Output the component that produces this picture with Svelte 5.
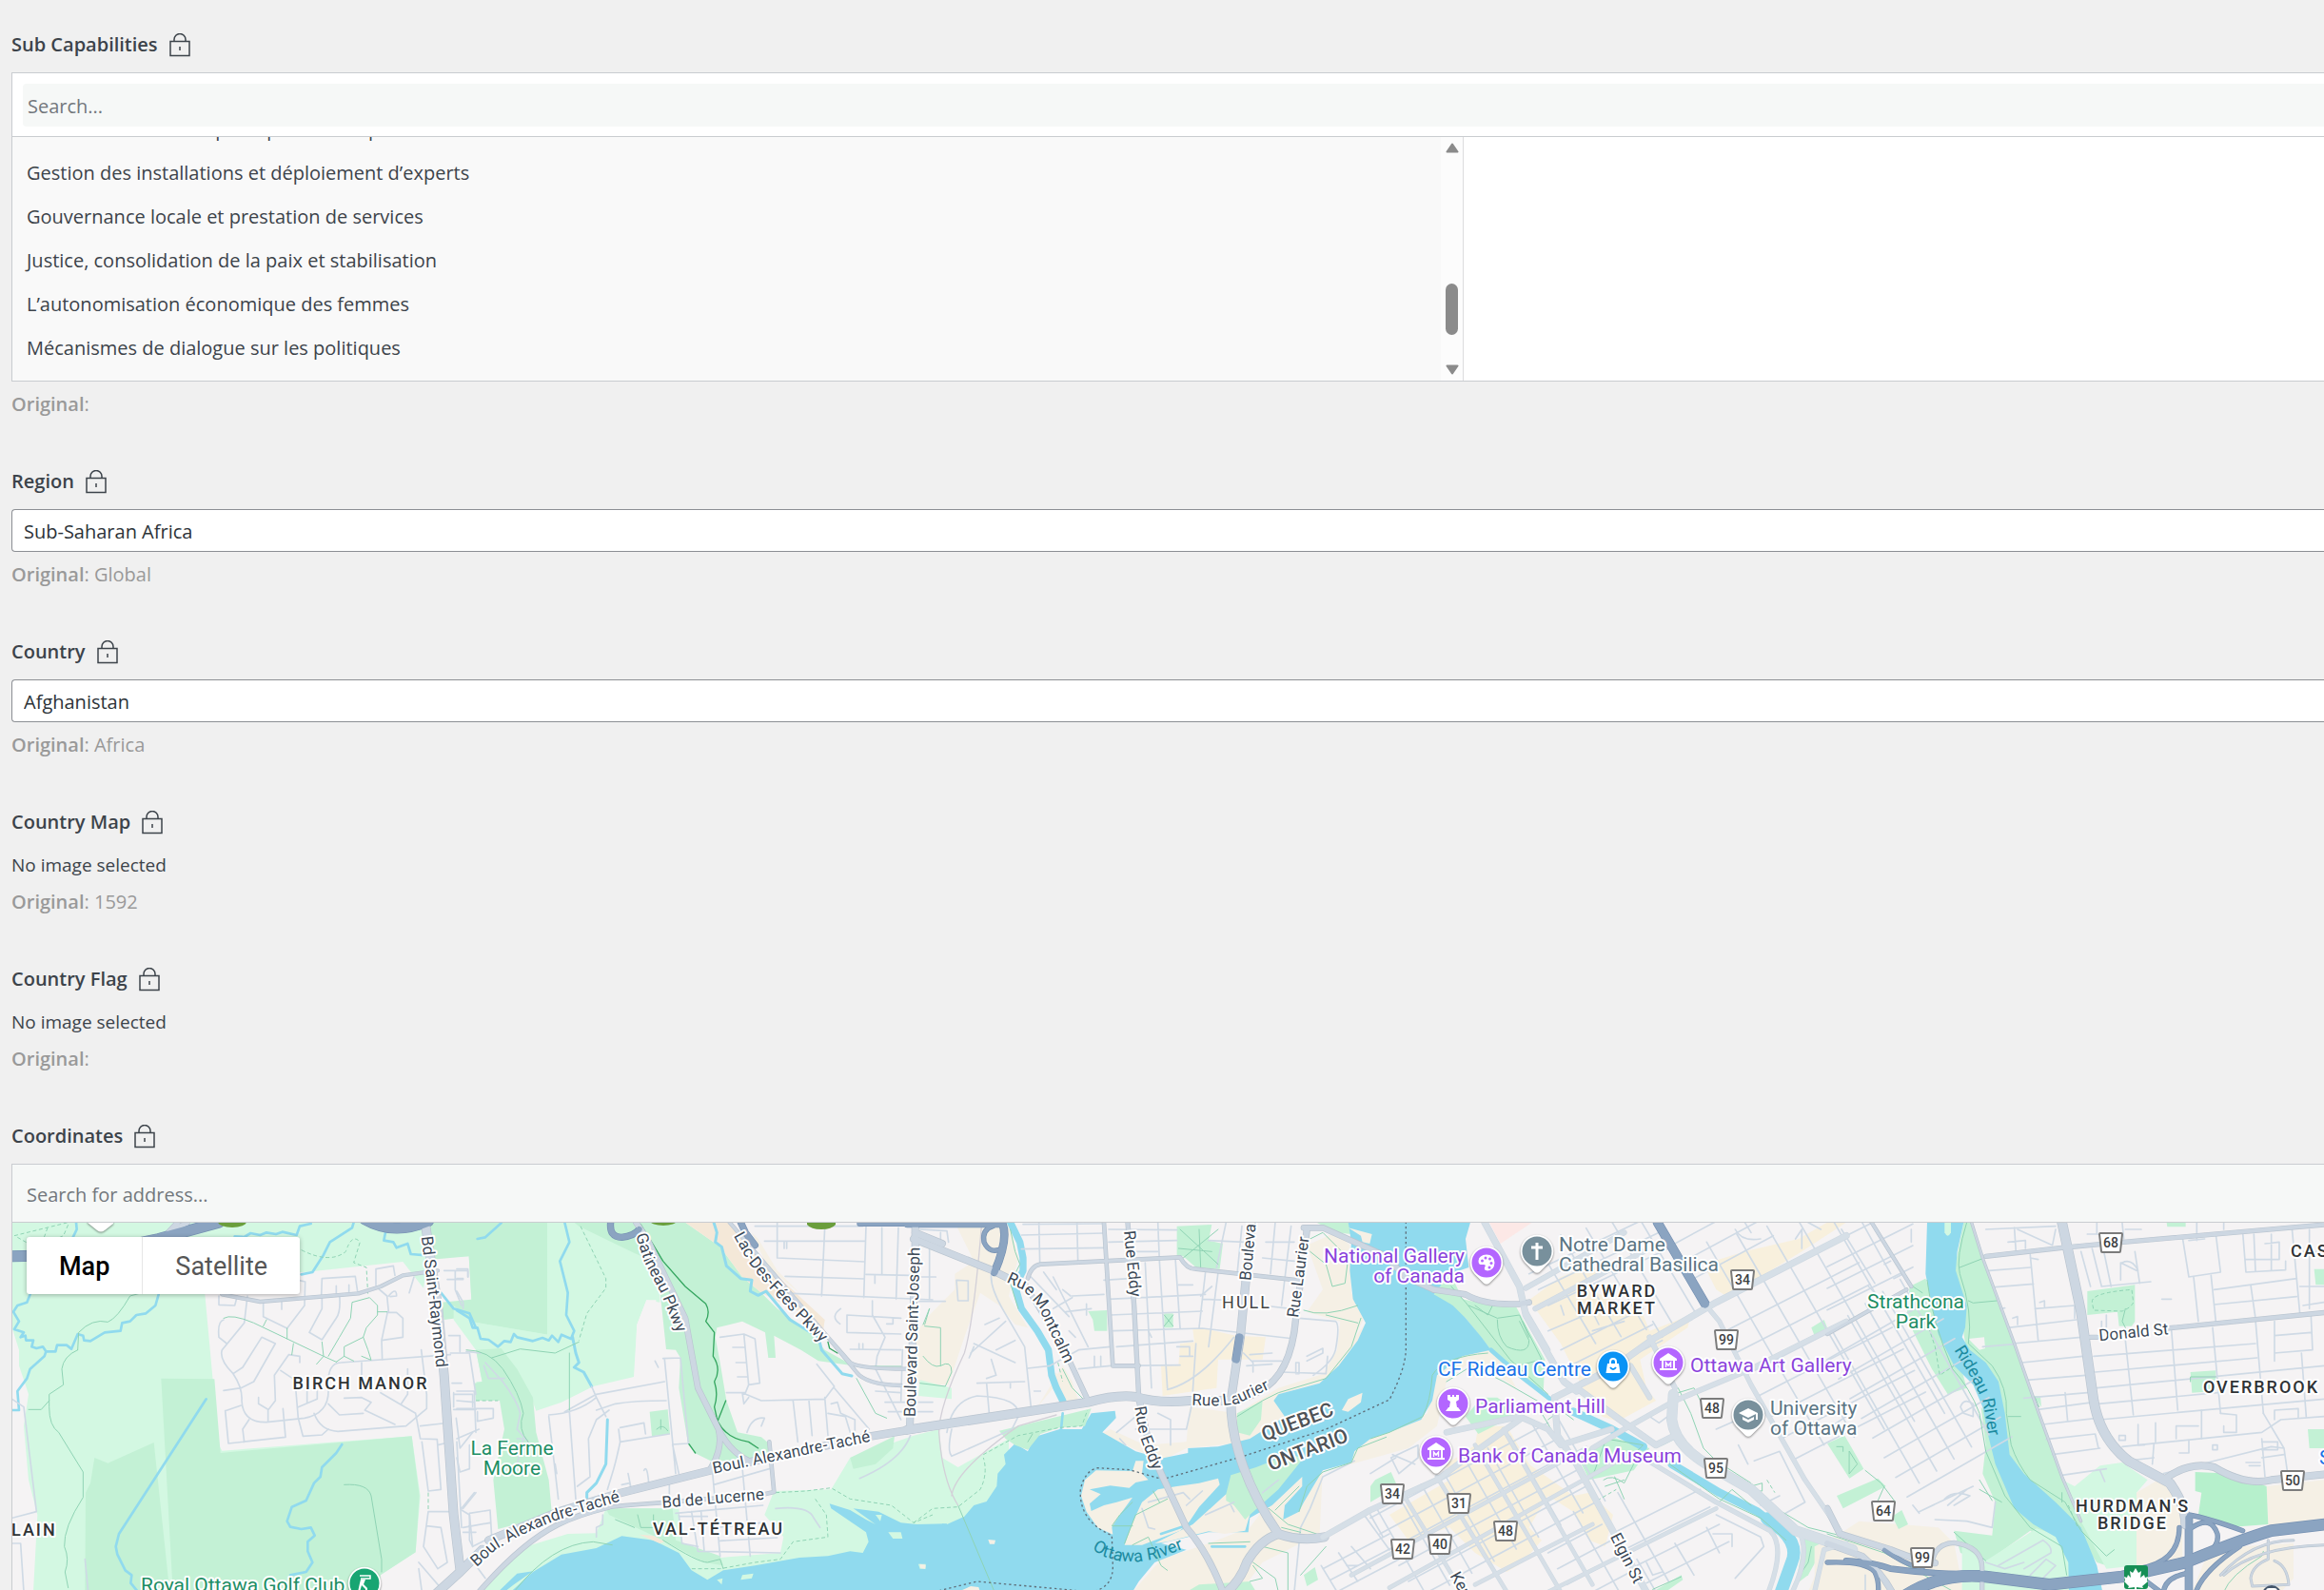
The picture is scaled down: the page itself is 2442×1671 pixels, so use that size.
<script>
  let search = $state('')
  let region = $state('Sub-Saharan Africa')
  let country = $state('Afghanistan')
  let address = $state('')
  let mapType = $state('map')

  const capabilities = [
    'Gestion des finances publiques et comptabilité',
    'Gestion des installations et déploiement d’experts',
    'Gouvernance locale et prestation de services',
    'Justice, consolidation de la paix et stabilisation',
    'L’autonomisation économique des femmes',
    'Mécanismes de dialogue sur les politiques'
  ]

  // Map geometry is stored per tile, three units to the pixel, tiles 480px apart.
  const TILE = 1440

  // n parallel segments, each one moved on by (dx, dy)
  function hatch(x, y, lx, ly, dx, dy, n) {
    let d = ''
    for (let i = 0; i < n; i++) d += `M${x + dx * i} ${y + dy * i}l${lx} ${ly}`
    return d
  }

  const areas = [
    [0, 'park', 'M38 38H1800V400H1440V1203H38Z'],
    [0, 'land', 'M640 200L960 195L1270 162L1335 245L1350 150L1478 145L1490 352L1520 400L1520 1203H1195L1200 1148L1310 1078L1325 900L1298 712L700 758L690 740Z'],
    [0, 'land', 'M38 370L60 440L60 490L90 580L75 680L90 850L118 960L105 1203H38Z'],
    [0, 'wood', 'M508 530L676 532L695 765L1298 712L1322 900L1310 1078L1200 1150L1180 1203H545Z'],
    [0, 'wood', 'M485 732L340 797L298 780L285 860L270 890L268 1203H535Z'],
    [0, 'wood', 'M1355 38H1725V392L1490 352L1478 145L1360 155Z'],
    [0, 'wood', 'M1390 290L1500 280L1500 370L1440 340L1400 345Z'],
    [1, 'land', 'M-10 400H700V1203H-10Z'],
    [1, 'park', 'M285 38H640V290L598 283L568 360L558 525L430 555L330 605L250 632L235 590L130 600L60 540L80 540L60 440L-10 345V300L50 352L290 392Z'],
    [1, 'land', 'M598 283H628L632 350L660 438L690 440L705 480L560 530L568 360Z'],
    [1, 'wood', 'M370 38H720L830 115L900 210L960 260L1010 310L1110 380L1160 440L1250 490L1140 475L1085 440L1000 395L1005 465H982L972 385L900 350L820 370L815 400L830 480L850 600L885 700L960 715L990 740L1000 790H800L750 765L730 740L700 560L705 465L690 440L660 438L640 250L620 160L560 135L385 50Z'],
    [1, 'wood', 'M60 440L140 435L190 500L240 590L250 700L290 850L300 960L130 1005L115 850L150 690L135 600L60 600L55 545L80 540Z'],
    [1, 'wood', 'M608 635L665 628L672 705L615 712Z'],
    [1, 'sand2', 'M720 38H860L960 160L1160 345L1155 380L1080 320L960 260L900 210L830 115Z'],
    [1, 'sand', 'M930 70L950 90L1010 190L1080 260L980 180Z'],
    [1, 'park', 'M60 1203L220 1060L350 1020L440 1018L470 940L700 940L710 1050L760 1075L830 1095L1020 1080L1030 1030L970 960L1000 885L1180 880L1240 780L1440 710L1520 690L1530 780L1580 810L1740 720V990L1500 1203Z'],
    [1, 'wood', 'M1240 780L1380 712L1375 750L1320 800L1250 815Z'],
    [1, 'wood', 'M470 940L680 940L690 1040L830 1090L840 1120L780 1110L650 1040L480 960Z'],
    [2, 'sand', 'M130 38H300L330 150L300 270L360 370L320 360L270 300L210 260L160 400L110 550L20 550L-10 500L20 370L50 330L130 250L130 200L190 160Z'],
    [2, 'park', 'M20 535L120 560V595L15 585Z'],
    [2, 'wood', 'M830 50L940 45L930 95L975 105L965 185L890 180L850 145H830Z'],
    [2, 'wood', 'M550 318L610 315V380H570L565 345Z'],
    [2, 'wood', 'M790 325H818V370H790Z'],
    [2, 'shop', 'M880 375L925 375L1015 395L1110 400L1100 470H960L955 560L785 585L780 490H835L840 420L885 415Z'],
    [2, 'wood', 'M1270 38H1370L1380 75L1330 70Z'],
    [2, 'sand', 'M1240 110L1330 70L1375 110L1380 260L1420 340L1340 500L1290 520L1335 440L1345 350L1240 320L1290 250Z'],
    [2, 'sand', 'M470 490L500 540L520 600L470 600L440 560L390 620L440 540Z'],
    [2, 'sand', 'M870 620L1020 640L1150 560L1310 510L1425 355L1400 410L1340 490L1280 545L1150 580L1180 650L1060 730L860 750L780 790L590 705L620 690L730 740L860 730Z'],
    [2, 'sand', 'M690 1203L780 1100L930 1050L1060 1000L1120 920L1200 840L1290 810L1280 1020L1200 1060L1100 1110L1030 1203Z'],
    [2, 'wood', 'M860 1203L900 1180L1060 1170L1080 1203ZM1365 940L1455 870L1470 895L1380 960ZM1230 1150L1265 1125L1275 1165L1240 1185Z'],
    [2, 'land', 'M1290 840L1390 800L1440 740L1500 730V1000H1285Z'],
    [3, 'sand', 'M-60 740L60 700L180 640L200 520L270 450L390 430L460 560L400 520L300 490L240 540L210 680L120 750L-60 800Z'],
    [3, 'pink', 'M375 38H510L410 105Z'],
    [3, 'shop', 'M520 310L650 230L860 330L880 380L1010 330L1000 370L850 470L870 560L900 600L780 665L730 650L670 560L600 420Z'],
    [3, 'shop', 'M1050 170L1180 130L1350 90L1440 38H1500L1360 130L1180 240L1130 275L1090 250Z'],
    [3, 'shop', 'M490 290L600 210L700 170L720 200L540 310Z'],
    [3, 'shop', 'M60 960L250 850L240 800L330 740L340 680L430 680L500 800L640 900L690 890L765 960L740 1060L690 1040L640 950L560 900L500 1000L540 1040L480 1110L430 1140L330 1080L250 1000L120 1040Z'],
    [3, 'wood', 'M300 650L350 590L400 590L470 640L340 705Z'],
    [3, 'wood', 'M650 770L760 715L880 750L830 820L690 850Z'],
    [3, 'wood', 'M15 850L65 825L85 870L0 920V870Z'],
    [3, 'wood', 'M190 250L255 205L290 280L380 300L460 305L500 380L550 470L545 580L470 520L380 440L300 340L220 290Z'],
    [3, 'wood', 'M1390 370L1430 345L1440 370L1400 395ZM890 1203L980 1150L985 1165L930 1203Z'],
    [3, 'wood', 'M1340 1180L1370 1020L1430 1060L1380 1150Z'],
    [3, 'sand', 'M1440 1060H1510V1203H1380Z'],
    [4, 'wood', 'M0 735L55 710L115 815L70 845Z'],
    [4, 'sand', 'M-40 1060L40 1020L100 980L350 1000L400 1050L430 1203H-40Z'],
    [4, 'wood', 'M430 38H455L490 150L530 260L590 420L660 620L740 840L800 980L880 1090V1120L850 1110L780 1010L700 930L560 780L540 560L440 450L400 190Z'],
    [4, 'land', 'M445 405L495 400L498 435L480 440Z'],
    [4, 'wood', 'M260 240L310 215L350 330L420 490L440 560L380 580L330 500L250 340Z'],
    [4, 'wood', 'M485 620L540 700L560 850L620 930L740 1010L750 1070L640 1010L500 1110L420 1080L400 1010L520 1025L530 920L490 830L500 740Z'],
    [4, 'park', 'M425 1060L500 1105L660 1003L740 1030L790 1110V1203H425Z'],
    [4, 'park', 'M740 850L780 870L860 805L930 795L1010 850L975 890V1120L880 1130L800 980Z'],
    [4, 'sand', 'M975 890L1060 840L1120 940V1120H975Z'],
    [4, 'sand', 'M1385 870L1566 850V1010L1390 1005Z'],
    [4, 'sand', 'M1150 1203L1200 1080L1300 1060L1470 1050V1160L1430 1203Z'],
    [4, 'turf', 'M1160 825L1280 830L1385 870L1390 990L1260 1000L1170 960L1180 890L1160 885Z'],
    [4, 'wood', 'M820 255L970 235V350L960 365H920L915 320L820 330Z'],
    [4, 'wood', 'M1145 510L1225 505V570L1150 575ZM1535 185H1566V235H1540ZM1515 690H1566V750H1520ZM1070 38H1130V52H1072Z'],
    [4, 'wood', 'M30 900L160 845L185 870L50 940ZM205 965L235 945L255 990L225 1005ZM650 585H672L675 620Z']
  ]

  const waters = [
    [1, 'water', 'M170 1203L240 1140L330 1085L440 1065L520 1027L620 1040L700 1080L740 1135L790 1165L840 1135L940 1120L1080 1095L1170 1090L1240 1075L1280 1080L1298 1045L1290 1015L1180 940L1175 925L1240 945L1290 975L1320 990L1250 940L1330 950L1400 985L1450 990L1545 988V1203Z'],
    [1, 'water', 'M130 1203L190 1145L240 1138L180 1180L150 1203Z'],
    [1, 'sand2', 'M575 1022L620 1026L655 1045L640 1050Z'],
    [2, 'water', 'M90 1203V988L105 990L160 965L190 930L230 918L262 870L265 830L290 800L285 770L320 735L360 760L380 715L460 690L530 690L560 640L635 632L638 655L595 700L700 760L780 782L865 765V750L960 745L1060 720L1170 650L1135 600L1150 580L1280 545L1340 490L1400 410L1425 355L1385 280L1375 190L1380 100L1370 38H1755L1740 90L1750 180L1690 200L1640 265L1700 300L1740 340L1790 400L1820 440L1730 460L1650 520L1635 600L1600 660L1500 700L1440 720L1390 760L1380 795L1290 820L1230 920L1215 950L1165 975L1170 930L1225 870L1225 840L1130 930L1060 970L1055 1015L930 1015L780 1050L860 1070L760 1110L710 1170L690 1203Z'],
    [2, 'sand', 'M575 820L690 822L700 790L725 790L720 830L740 850L700 858L680 875L620 868L555 880L590 895L555 925L560 948L600 930L640 920L690 905L650 960L625 1000L628 1022L580 1000L545 950L528 900L540 850Z'],
    [2, 'sand', 'M665 1055L690 985L720 920L770 880L830 870L900 860L960 845L965 865L900 935L870 980L840 1010L720 1055Z'],
    [2, 'sand', 'M760 1050L880 990L985 895L1060 960L1045 1010L980 1020L930 1012L800 1045Z'],
    [2, 'wood', 'M985 895L1000 835L1080 810L1180 770L1230 780L1150 880L1060 960L1045 975L1010 930L985 915Z'],
    [2, 'sand', 'M1350 630L1370 595L1415 575L1410 605L1370 635ZM1370 55L1445 75L1438 105L1415 100L1410 80Z'],
    [2, 'wood', 'M1020 640L1100 600L1095 660L1060 710L1020 700Z'],
    [2, 'wood', 'M270 695L560 625L540 680L460 685L400 705L360 755L320 740L290 720Z'],
    [1, 'park', 'M1360 1015L1400 1015L1405 1035L1375 1035ZM900 1150L935 1145L930 1160L895 1165ZM820 1165L838 1160L835 1180ZM1455 1115H1478V1130H1460ZM1320 960L1340 960L1335 980Z'],
    [2, 'sand', 'M235 1038L258 1040L255 1052H240ZM20 1115L38 1118L36 1130L22 1128ZM140 1203L180 1185L205 1188L210 1203ZM440 510L465 520L480 570L455 575Z'],
    [4, 'water', 'M315 38H430L410 130L405 190L440 300L435 370L425 400L450 440L500 480L540 540L560 640L575 770L620 830L720 920L800 1000L850 1120L868 1203H762L760 1110L720 1030L650 990L590 940L560 870L530 800L505 700L490 620L460 550L400 490L350 390L330 300L310 200Z'],
    [4, 'park', 'M370 38H390V70Q380 90 370 70Z']
  ]

  const streams = [
    [0, 8, 'M95 265L85 290L55 300L42 320L60 350L45 375L75 385L65 400L80 395L82 410L105 410L100 430L115 435L135 430L145 445L175 445L180 425L210 425L225 437L245 390L262 395L265 410L285 412L330 385L380 380L385 355L410 350L430 330L460 325L490 300L500 265'],
    [0, 8, 'M145 445L140 460L95 500L85 530L55 570L60 630H38M240 38L242 60L230 85'],
    [0, 8, 'M740 82L770 84L790 72L820 78L840 70L870 75L890 68L935 78L945 50L980 42M950 202L985 195L1020 140L1040 100L1110 55L1115 38'],
    [0, 8, 'M1215 70L1210 95L1240 100L1250 118L1285 105L1295 138L1345 142M1390 260L1430 310L1480 325L1500 370'],
    [0, 8, 'M650 595L375 1020L365 1060L370 1085L395 1135L415 1150L412 1175L435 1203'],
    [0, 8, 'M1078 738L1060 765L1015 810L1010 840L990 860L965 915L920 935L905 980L915 998L950 1005L980 1000L992 1025L970 1045V1075L985 1110L965 1140L915 1150'],
    [1, 8, 'M65 90L90 85L140 40M340 38L355 100L325 160L350 260L345 330L370 380L360 405L330 392L320 415L300 395L290 410L270 402L240 412L190 400L180 390L170 415L150 412L130 430L100 408L75 405L65 370L50 370L40 340L0 315'],
    [1, 9, 'M365 400L375 450L385 480L370 495L400 510L425 555M475 660L470 800L440 860L410 890V910'],
    [1, 9, 'M810 38L820 70L815 100L835 115L850 175L895 215L930 220L925 255L950 268L975 255L1050 345L1140 400L1150 440L1215 515L1245 522'],
    [2, 22, 'M305 38L335 100L345 150L345 190L320 240L340 310L390 380L425 440L435 520L450 560L470 600'],
    [2, 8, 'M470 640L465 690M780 1020L870 990M940 1060L1045 1060M890 960L920 940'],
    [3, 14, 'M380 440L470 520L560 590L640 640'],
    [3, 26, 'M640 635L760 690L860 745M950 800L1100 890L1220 950L1310 1020'],
    [3, 40, 'M1250 972L1300 1010Q1350 1060 1328 1110L1285 1230']
  ]

  const minor = [
    [0, 'M690 270V298L740 300L748 270M830 290V335L905 372L960 300L962 225L940 220M1013 270L1015 215L1120 208L1128 262M1060 238V262M1100 235V258M1070 265Q1075 320 1060 340L1015 408L975 385L1015 310V270M888 285V312'],
    [0, 'M780 270L770 355L700 440Q690 470 735 515Q765 560 762 600Q765 670 840 668L960 655Q1040 640 1035 560Q1030 480 1075 480L1420 455M705 345Q685 350 690 400L715 420M735 515L765 495L825 400L868 420L800 540L760 560L705 568'],
    [0, 'M865 520L910 455L945 460V480M865 520L868 600L845 630V665M815 590V610L845 628M885 505L930 535L940 655L955 712L1015 708L1035 690M710 632L760 615M710 632L720 735L900 715L892 625M770 730L765 690L785 660M968 570V605M940 620L1000 595V570'],
    [0, 'M990 640Q1010 695 1065 697L1280 680L1345 625V580L1328 440M1140 480V520M1205 470L1203 410L1270 400V340L1250 322H1220M1185 235V185L1240 175L1245 205M1225 320L1220 270L1185 240M1203 410L1222 320M1225 270Q1250 240 1250 270L1230 272M1290 260L1305 210'],
    [0, 'M1200 575L1310 640L1325 720L1378 722L1390 880L1350 885L1330 730M1245 675L1150 630L1170 605L1140 590L1085 592M1035 610L1070 645L1145 640M1265 610L1285 580V500M1350 950H1420M1345 995L1390 1000L1410 1110L1380 1130L1335 1060L1350 950M1320 1110L1400 1203M1330 1203L1320 1130M1380 740L1400 735M1325 680L1395 672'],
    [0, 'M1400 190H1475V210M1410 218H1460M1435 190V250L1455 300M1415 395H1450V445M1420 450L1480 450L1500 580M1425 545H1455M1430 580H1490V620M1430 628H1500M1430 575V620M1438 655L1450 750L1490 700M1440 780L1450 825L1480 815V740M1460 940L1500 890M1460 1015H1500M1455 945L1480 960L1490 1060'],
    [0, 'M38 595L75 620L115 950L38 970M38 1050H65L75 1203M268 1100L278 1203'],
    [1, 'M650 467L705 465M655 470L690 830M705 465L730 735L680 738L700 830M625 475L635 495M340 635L440 580L655 540M440 630L500 610Q560 600 660 600M290 650L320 910M290 645Q380 640 440 590M355 635L375 910M380 870L420 840L415 720L440 660L480 630M425 555L440 590L470 650'],
    [1, 'M515 685L590 670L595 705M510 690L515 730L670 705M515 730Q500 800 490 830L475 880M520 865L545 860L550 880M540 830L550 880M590 820Q600 800 605 860M310 800L315 830'],
    [1, 'M830 400L905 390L940 405L955 545L920 550L910 575H850M905 390L920 550M870 432H905M880 480H910M885 525H915M850 575H900L960 600L1160 595L1190 555L1135 485M900 575L905 610L920 590M915 700Q930 650 970 655L960 680M1190 560L1300 690M1060 600L1075 730M1110 600L1120 710M1160 590L1170 710M1170 640L1225 650L1240 700M1180 610L1200 605L1210 640L1255 660V700'],
    [1, 'M970 97H1285M1010 150L1285 162M1035 208L1285 216M1060 262L1500 282M1010 38V150M1160 55L1150 270M1290 50L1283 275M1340 55V200M1392 55L1385 280M1290 202L1430 205M1310 285V330L1350 400L1325 460L1320 500M1230 330L1400 340M1230 330V385L1400 390M1210 310Q1175 335 1208 358M1240 438L1400 440M1375 340V358H1355M1268 420V438M1280 420V438M1320 500L1400 660M1320 570L1400 575M1350 605H1500M1360 635H1500M1405 440L1400 600M1318 205V230M1032 100V120M1040 100V120M940 50H1280'],
    [1, 'M805 815L830 1090M900 810L925 1090M810 865L985 815M700 960L710 1050L760 1060M740 950L760 1075M770 950L780 1075M690 955L965 930M820 1000L960 985M830 1042L1010 1032M760 1075L1020 1080M670 860V900M700 965H790M1005 940Q1110 930 1125 970L1145 1000M1430 710Q1400 790 1270 845'],
    [1, 'M0 570H55L60 700M0 600L55 605M0 625H115V655L65 665V635M0 720L70 690M15 940L55 890M40 960V1040L50 1060L110 1030L105 945L40 955M20 1000L105 985M0 185H35V210M0 215H20M0 255L20 290V310M0 730L15 1000M30 445L75 450M85 490L100 530H150M90 480L145 540Q190 600 200 640L190 690L225 730M190 720H210L190 800M440 1030V1000L460 990V960M60 1120L90 1160'],
    [2, 'M340 78L600 72M340 122L600 118M395 38L398 165M515 38L518 160M345 44L600 42M615 100L830 95M615 60L830 62M730 165L750 560M770 38L775 160L800 560M825 150L840 370M600 220L680 215M615 280L920 265M620 330L910 318M630 380L910 372L1200 405M640 430L880 412M640 490L840 488M800 565Q900 540 1010 400M890 420L880 570M920 195L900 370M960 195L930 430M985 38L955 180M930 95L1040 100M1035 50L1020 200M910 280L1040 285'],
    [2, 'M1100 150L1200 160M1110 100H1200M1140 38L1125 200M1190 50L1160 300M1100 300L1190 310M1215 340L1330 350Q1345 360 1330 440Q1320 480 1260 520M1040 450L1070 480V510M1060 455L1130 450M1065 475H1160M1050 490L1130 485M1160 510L1300 515L1305 460M1205 480V515H1215V480ZM1240 460L1290 435V450L1240 475M700 130H770M610 160L830 150M835 235H880M905 270L940 240M830 430H870V460M880 460H840M750 400L740 380'],
    [2, 'M370 210L490 335M440 210L520 370L550 430M440 310L500 275M470 250L495 270M500 270L600 265M480 320L560 310M490 380L510 400M360 498L430 490L520 440L620 430M520 500L620 490M545 295V330M570 460V495M590 460V490M410 195L450 250'],
    [2, 'M245 200Q240 240 280 310L350 430L370 620M50 90V280M0 210H70M0 287H100M20 60L105 65L110 100M85 70V100M135 220L140 285H172V222ZM180 450L290 350M190 420L320 480M225 360L270 340M245 470L260 520L230 530M200 545L350 540M230 545L240 660M105 700Q120 600 200 585Q340 590 330 650L310 690Q200 740 120 775Q105 760 120 690M175 465L190 430M260 440L320 410M380 570H400M305 545V560'],
    [2, 'M640 700L700 650M700 690H860L880 600M770 640L810 660V740M650 720L668 740M720 940L740 1000L760 1005M740 920L850 890L870 910M860 930L910 885M920 960L1010 920M1000 930L1010 950M1220 1000L1250 940L1290 840L1390 790M1220 1000L1200 1203M1100 890L1150 850'],
    [2, hatch(1290, 1130, 210, -110, 25, 35, 3) + 'M1420 960L1500 1070M1285 1120L1335 1203M1340 1080L1400 1170M1440 960L1480 1030M1380 1060L1440 1130M1365 1120H1400'],
    [3, hatch(1120, 380, 420, -215, 35, 68, 7)],
    [3, hatch(1060, 100, 370, 640, 95, -25, 5)],
    [3, hatch(950, 110, 260, -140, 30, 55, 3)],
    [3, hatch(520, 100, 190, 320, 80, -22, 5)],
    [3, hatch(500, 200, 380, -180, 30, 50, 3)],
    [3, hatch(600, 440, 260, -130, 30, 50, 3) + 'M560 380L700 320L720 360M700 380L800 350'],
    [3, hatch(0, 970, 560, -300, 30, 50, 6)],
    [3, hatch(20, 940, 160, 280, 70, -38, 9)],
    [3, hatch(560, 1080, 170, -90, 30, 50, 4)],
    [3, hatch(640, 950, 160, 280, 70, -30, 3)],
    [3, hatch(780, 1010, 260, -130, 30, 55, 4)],
    [3, 'M840 1100L900 1203M960 1050L1020 1150M1060 1000L1100 1080M1090 960L1230 1030L1240 1060L1150 1160M1080 1020H1140V1060M870 1110L890 1150L920 1140M65 780L150 740V780L90 830ZM0 830L80 780M70 770L140 800M880 650L910 670L950 640M1090 690L1180 650M1160 740L1190 800M1210 790L1290 760L1370 920L1300 960M1290 900L1230 930M600 300L610 330M890 350L920 400M1340 90L1360 60V120M1150 60Q1170 100 1230 90M1180 38L1200 70M1380 38L1420 60'],
    [4, 'M510 190L640 180M530 242L650 232M545 310L560 308M570 370L785 345M585 420L800 400M615 480L805 460M630 535L815 520M620 592L820 575M665 628L840 605M680 675L850 655M690 722L845 705L855 750M710 770L860 750M740 835L880 815M640 140L665 410M655 310L780 300V340M750 575L758 665M585 340L600 335V360M670 290L685 285V305M640 150L665 155M490 430L590 422'],
    [4, 'M840 460L1350 420M845 510L1355 465M850 560L1566 490M855 610L1230 575M860 660L1566 595M930 745L1370 700L1430 660L1566 650M940 790L1030 780M940 410L965 645M1085 375L1105 630M1215 370L1240 640M1350 345L1375 640M1495 450L1510 650M1120 85L1140 210L1240 195L1225 75M1155 210L1170 350M1210 205L1225 350M1335 235L1350 340M1220 250L1480 215M1220 297L1480 272'],
    [4, 'M1465 55L1490 325M1310 70L1320 195L1445 188V160M1345 75L1350 190M1400 75V190M1320 155H1425V100L1380 105M1410 350V450L1530 440L1525 330M1410 395L1525 385M1410 450V475M930 40L935 90M850 40V75L930 80M800 130L830 240M835 120L865 240M870 120L895 240M865 240L1020 225M970 130L985 230M925 165L975 190M925 165V220M930 165Q960 150 980 190M590 55L595 130M500 60L720 50M600 60L710 110L720 60M570 100L625 95V120M820 75H850M940 60H990'],
    [4, 'M1030 735L1025 800M1180 630V720M1100 680H1170M1240 640L1290 645V700H1250V680M1375 640L1440 750L1450 820M1370 720L1380 840M1370 780L1440 770M1100 680V720M1250 38V60M1165 38V95M1520 60V310M980 675V740H1000M1060 830L1400 745L1440 750M1215 755V740H1230V755ZM1320 795H1365M1330 805H1365M1370 730H1420V755H1370M1410 630L1485 625V655M1410 630V660M920 710H940V725H920ZM860 820L875 855M1140 725V765H1110M1035 670V730M1500 130H1566M1490 240H1566M1500 300L1566 290M1055 280H1085M1140 95L1190 90M865 350V370M880 330V370'],
    [4, hatch(0, 110, 270, -135, 0, 68, 4)],
    [4, hatch(0, 470, 330, -190, 36, 62, 8)],
    [4, hatch(10, 370, 280, 490, 55, -38, 5)],
    [4, 'M45 60L150 230M110 38L200 200M130 240L160 270M180 170L200 160M340 975L440 980L520 1000L530 920M290 950L460 870M380 930L440 880M370 910Q400 880 450 900L400 930M420 620Q430 590 460 610V650L430 640ZM270 930L290 955M0 690L60 650M120 1150V1203M210 215L240 200M265 60V100M500 1110L560 1130L620 1110M540 1120L680 1040Q710 1060 705 1080L620 1130M640 1150L690 1100L720 1120L680 1160']
  ]

  // [tile, kind, width, path]; drawn twice, casing under fill
  const roads = [
    [0, 'road', 9, 'M700 265L820 288L1130 262L1200 240L1270 205L1380 190'],
    [0, 'road', 26, 'M1340 38L1380 300L1400 520L1430 960L1450 1130M1340 1240L1450 1140L1520 1070'],
    [0, 'road', 14, 'M560 38L530 70M545 60L590 40'],
    [0, 'hwy', 32, 'M38 145L260 140L500 90L690 38M1150 28Q1240 80 1350 34'],
    [1, 'road', 10, 'M440 940Q520 930 640 922L970 895L1000 888L985 730'],
    [1, 'road', 14, 'M60 1215Q200 1050 320 990Q380 960 480 935'],
    [1, 'road', 22, 'M100 1040L320 950L500 895L800 820L1290 715L1500 680'],
    [1, 'road', 16, 'M565 38L600 90L720 340L760 560L825 690Q840 750 800 815M825 690Q860 760 920 790'],
    [1, 'road', 9, 'M860 38L1170 400L1240 480Q1270 500 1420 500M1170 400L1260 510Q1290 550 1400 552'],
    [1, 'road', 20, 'M1445 38V130L1428 690M1445 70L1530 105'],
    [1, 'hwy', 18, 'M485 38Q480 85 520 85Q560 80 575 60M895 38L910 70L940 110'],
    [1, 'hwy', 14, 'M1270 42H1480'],
    [2, 'road', 20, 'M0 90L250 190L300 215'],
    [2, 'road', 10, 'M360 215Q370 175 400 170L840 148Q860 185 890 185L1210 220M600 38L628 490H710'],
    [2, 'road', 14, 'M300 215L350 230L480 450L550 600'],
    [2, 'road', 12, 'M675 38L695 300L710 590'],
    [2, 'road', 26, 'M-20 692L550 605Q640 580 700 588Q770 610 870 600L990 600'],
    [2, 'road', 18, 'M712 600L745 750L785 840L860 1000Q930 1080 980 1215'],
    [2, 'road', 24, 'M1065 38L1030 400L1000 600'],
    [2, 'road', 18, 'M1240 60L1205 340Q1190 520 1090 570Q1040 600 990 605'],
    [2, 'road', 26, 'M1000 600Q1000 700 1040 810Q1080 920 1150 1020M1150 1020Q1090 1040 1050 1110Q1030 1170 975 1215M1150 1020Q1220 1045 1295 1030'],
    [2, 'road', 16, 'M1230 55H1290L1490 145L1550 210L1640 250'],
    [2, 'hwy', 22, 'M-20 42H280Q300 90 255 195'],
    [2, 'hwy', 12, 'M250 50Q215 60 222 100Q240 140 280 120'],
    [2, 'hwy', 24, 'M1028 400L1017 470'],
    [3, 'city', 10, 'M-60 1150L680 750M60 1190L780 790M330 1180L700 990M560 1203L1090 940'],
    [3, 'city', 10, 'M100 890L290 1203M210 840L430 1203M330 740L600 1203M420 690L700 1180'],
    [3, 'city', 16, 'M-150 1030L0 945L210 850L290 790L470 660'],
    [3, 'city', 16, 'M240 700L470 650L560 690L600 740L760 690'],
    [3, 'city', 14, 'M490 245L800 70M520 310L860 130'],
    [3, 'city', 12, 'M490 320L560 440M1050 290L1100 350L1200 550L1370 850L1480 1010'],
    [3, 'city', 18, 'M360 38L470 240L490 330L610 540L650 570'],
    [3, 'city', 18, 'M580 590L760 500L900 400L1090 290L1500 80M580 590L590 710L650 800L720 930L870 1203'],
    [3, 'city', 14, 'M700 750L800 690L960 600L1200 500L1500 350M880 400L960 560M820 490L880 590'],
    [3, 'road', 16, 'M200 250L300 265Q360 300 470 295L500 290'],
    [3, 'city', 18, 'M650 560L800 670L900 740L960 710'],
    [3, 'city', 30, 'M955 580L950 660Q960 740 1060 800L1200 880L1340 1010L1520 1070'],
    [3, 'city', 12, 'M860 780L1090 920L1260 1010Q1310 1060 1255 1203M1350 1010Q1390 1080 1330 1203M1500 1050L1430 1070L1400 1203'],
    [3, 'hwy', 26, 'M905 38L1055 295'],
    [4, 'road', 6, 'M455 38L490 150L590 420L660 620L740 840L800 980'],
    [4, 'road', 28, 'M740 38L760 130L800 320L840 600Q860 720 950 790L1080 860Q1130 930 1130 990'],
    [4, 'road', 20, 'M1060 850Q1140 790 1220 810Q1320 870 1400 850L1570 832'],
    [4, 'road', 12, 'M500 145L740 118L900 103L1570 45M830 400H850M1070 372L1570 322'],
    [4, 'road', 9, 'M140 38L265 240M0 390L250 250'],
    [4, 'road', 18, 'M0 940L40 1020L200 1070Q300 1110 340 1112M0 1050L110 1090Q180 1150 210 1215'],
    [4, 'road', 12, 'M330 1112Q340 1050 400 1048Q490 1060 488 1130V1215'],
    [4, 'road', 5, 'M1250 1150Q1350 1060 1570 1055M1390 1040V1100Q1340 1120 1335 1160L1340 1185L1455 1180Q1450 1120 1410 1105M1240 1150Q1340 1040 1470 1040'],
    [4, 'hwy', 12, 'M0 1110Q120 1105 150 1140Q165 1170 160 1210M180 1070Q250 1120 300 1128M1140 960Q1200 970 1310 1010M1140 1100Q1240 1080 1230 1020Q1210 960 1150 1000M1160 1210Q1180 1140 1300 1060M1110 1000Q1110 1110 980 1130M1060 1210Q1060 1160 1130 1145M1000 1165L1060 1210'],
    [4, 'hwy', 16, 'M60 1105Q150 1110 200 1130Q350 1150 480 1145'],
    [4, 'hwy', 22, 'M1140 970V1210'],
    [4, 'hwy', 34, 'M230 1225Q350 1140 500 1155L700 1180L930 1155L1130 1110Q1300 1040 1400 1010L1570 990']
  ]

  const trails = [
    [0, 'trail', 'M245 440Q200 460 195 500L200 550L155 580V620Q155 680 185 700L262 825V905Q200 1000 203 1060Q220 1100 205 1140L215 1190M90 628H130L155 600M245 440L248 385Q290 340 340 352Q370 340 410 270L440 262M1085 865Q1160 860 1170 900L1203 1100V1140'],
    [0, 'trail', 'M705 340Q730 325 800 355L905 405L1020 460L1060 478M830 365L840 345M905 405V372M925 420L920 455M1015 415L1020 460L998 485M1035 460L1070 400L1105 340L1110 290L1165 275L1190 300V330L1155 370L1145 400L1085 430V460L1115 475M1145 400L1160 440L1170 472L1140 460M1190 320H1220M1060 478L1085 460'],
    [0, 'trail dash', 'M950 125Q1040 170 1090 130Q1110 70 1135 100L1115 165L1155 180L1160 265M45 80L215 38M55 85L90 105M150 55L130 110L200 80L215 45M1350 890V950'],
    [1, 'deep', 'M580 45L620 110L650 160L720 240L785 295Q800 320 785 350L812 385L808 460Q835 500 812 540Q825 580 812 620L822 665Q850 720 920 730L950 750M822 665L848 600M732 737L752 765M1170 415L1175 435L1200 450'],
    [1, 'trail', 'M30 440Q100 440 145 500Q200 580 210 640Q190 690 225 730M110 465L200 437L310 450L385 415M355 450V630M1240 480L1280 492H1400M1260 530L1320 640L1355 655M180 1203Q300 1050 430 1045L490 1055M650 1040Q760 1110 790 1110L830 1100L840 1130M630 690Q650 670 665 695M643 660V690M970 170L1050 260M570 960L580 1000H620V960M500 975L560 1000M1475 360L1490 310'],
    [1, 'trail dash', 'M390 50L470 215V245L410 325L385 410M1005 890L1100 885L1180 875L1240 910L1370 930L1440 985L1500 960M1130 910L1165 960L1170 1030L1060 1045L1020 1100L940 1110L830 1130L740 1130M60 600H130'],
    [2, 'trail', 'M35 365L85 370V490Q60 500 30 460M85 490Q120 470 120 510L100 555L20 545M30 360L50 310M305 60L320 130L335 170L305 230L330 310M470 500L500 560L545 605M840 60L960 170M960 60L850 150M900 60L905 180M835 120L940 130M1250 90L1290 70L1370 150L1360 230L1320 240L1300 170L1250 130M1230 315Q1290 340 1400 300M1410 340L1380 430L1300 530L1150 575L1100 600L1020 650M1300 330L1400 355M790 330L818 365M818 330L790 365'],
    [2, 'trail', 'M665 1050L700 960L800 910M690 920L650 960L625 995H690M755 885L775 920M690 1055L740 1030L780 1120L800 1135M930 1050L1060 1045M1120 940L1180 990L1270 1020M1070 1110L1140 1160L1150 1203M1100 1060L1180 1080V1203M1215 950L1240 870L1290 825L1380 795L1400 750L1490 715M1140 945L1215 870M1160 1000L1220 1015M1070 1120L1100 1160L1060 1170M1300 1060L1220 1150M140 930L255 1203M360 730L375 705'],
    [2, 'trail dash', 'M0 985L60 940L140 935L210 880Q235 830 220 780M220 770L330 710L460 685L530 680L548 630M455 480L470 540'],
    [2, 'rail', 'M215 38Q190 350 160 450Q80 620 80 700Q90 850 140 930M120 900Q130 820 330 680L450 645'],
    [3, 'trail', 'M0 720L60 700L165 650Q190 600 195 520Q230 460 370 450M255 240L300 290L440 470L560 580M310 300L400 340L470 330L500 400M400 345Q400 400 430 430Q500 460 500 410L470 350M330 300L370 330L390 290M480 350L540 470L430 500M240 540L320 490L420 540L560 620M540 640L570 690M560 660L600 630L640 660M700 840L740 730M740 720L860 740L800 800M770 840L800 910M735 850Q760 830 800 860L830 800M740 870L800 850M970 560L1010 640L1050 750L1090 790L1200 860L1280 940L1380 1000L1500 1030M970 575L1020 560L1040 600M900 770L1100 910L1230 970L1310 1040M920 740L960 720L1000 760M1100 920L1140 880L1200 930M1200 870L1235 860V885H1210ZM1390 1060L1380 1110L1340 1170M890 1195L980 1155'],
    [3, 'trail dash', 'M715 915L775 880M1250 850L1275 890'],
    [4, 'trail', 'M440 38Q405 150 418 200Q460 320 445 420L520 490Q570 560 565 640L580 740Q600 800 640 850L750 920L800 1010L880 1090L905 1070M315 220Q330 350 395 500Q450 560 480 640L500 760L560 900L640 1000L740 1060L755 1150M418 180L495 150M445 285L460 292L535 285M570 650H610M120 820L170 860L215 920M180 870L160 915M480 850L520 915M480 880L550 920M400 1015L500 1105M0 1020L180 1080L400 1203M1250 1203Q1270 1150 1370 1090L1375 1075M70 760L95 800L70 830ZM30 745H50V760M1145 540V525H1225M940 310L930 350L940 370M270 240L300 260M655 590L668 620L650 600M740 890V920'],
    [4, 'trail dash', 'M835 290Q830 260 960 250L965 290Q960 305 930 318L840 315ZM320 370L340 430L355 520L400 490M760 930L790 1000'],
    [2, 'border', 'M65 1203L200 1170L560 1203Q630 1190 628 1120L625 1025Q520 980 526 880Q540 820 580 812L680 818L785 848L1040 775L1300 690L1500 597Q1550 500 1552 440V38']
  ]

  // [kind, anchor, x, y, lines, line height]
  const labels = [
    ['area', 'middle', 379, 188, ['BIRCH MANOR']],
    ['area', 'start', 12, 342, ['LAIN']],
    ['area', 'middle', 755, 341, ['VAL-TÉTREAU']],
    ['area thin', 'middle', 1310, 103, ['HULL']],
    ['area', 'middle', 1699, 91, ['BYWARD', 'MARKET'], 18],
    ['area', 'middle', 2376, 192, ['OVERBROOK']],
    ['area', 'start', 2407, 49, ['CASTLE HEIGHTS']],
    ['area', 'middle', 2241, 317, ['HURDMAN\'S', 'BRIDGE'], 18],
    ['poi green', 'start', 148, 401, ['Royal Ottawa Golf Club']],
    ['poi green', 'middle', 538, 257, ['La Ferme', 'Moore'], 21],
    ['poi green', 'middle', 2013, 103, ['Strathcona', 'Park'], 21],
    ['poi purple', 'end', 1539, 55, ['National Gallery', 'of Canada'], 21],
    ['poi slate', 'start', 1638, 43, ['Notre Dame', 'Cathedral Basilica'], 21],
    ['poi blue', 'end', 1672, 174, ['CF Rideau Centre']],
    ['poi purple', 'start', 1776, 170, ['Ottawa Art Gallery']],
    ['poi purple', 'start', 1550, 213, ['Parliament Hill']],
    ['poi purple', 'start', 1532, 265, ['Bank of Canada Museum']],
    ['poi slate', 'start', 1860, 215, ['University', 'of Ottawa'], 21],
    ['poi blue', 'start', 2437, 267, ['St. Laurent']]
  ]

  function curve(tile, points) {
    return 'M' + points.map(([x, y]) => `${(tile * TILE + x) / 3} ${y / 3}`).join('L')
  }

  const streets = [
    ['street', 'Bd Saint-Raymond', curve(0, [[1328, 83], [1350, 260], [1376, 500]])],
    ['street', 'Gatineau Pkwy', curve(1, [[564, 78], [592, 165], [640, 255], [700, 400]])],
    ['street', 'Lac-Des-Fées Pkwy', curve(1, [[872, 80], [920, 165], [985, 245], [1060, 325], [1160, 430]])],
    ['street', 'Boulevard Saint-Joseph', curve(1, [[1445, 652], [1460, 100]])],
    ['street', 'Boul. Alexandre-Taché', curve(1, [[62, 1125], [120, 1072], [200, 1025], [310, 978], [520, 915]])],
    ['street', 'Boul. Alexandre-Taché', curve(1, [[810, 830], [1320, 725]])],
    ['street', 'Bd de Lucerne', curve(1, [[648, 938], [990, 910]])],
    ['street', 'Rue Montcalm', curve(2, [[292, 226], [345, 250], [390, 300], [480, 490]])],
    ['street', 'Rue Eddy', curve(2, [[663, 65], [685, 290]])],
    ['street', 'Rue Eddy', curve(2, [[697, 620], [712, 710], [765, 850]])],
    ['street', 'Boulevard Maisonneuve', curve(2, [[1063, 223], [1100, -200]])],
    ['street', 'Rue Laurier', curve(2, [[1212, 340], [1250, 60]])],
    ['street', 'Rue Laurier', curve(2, [[877, 614], [960, 617], [1020, 610], [1150, 550]])],
    ['street', 'Elgin St', curve(3, [[755, 1028], [850, 1215]])],
    ['street', 'Kent St', curve(3, [[250, 1152], [350, 1330]])],
    ['street', 'Donald St', curve(4, [[858, 412], [1120, 386]])],
    ['province', 'QUEBEC', curve(2, [[1106, 728], [1390, 622]])],
    ['province', 'ONTARIO', curve(2, [[1126, 822], [1450, 698]])],
    ['river', 'Ottawa River', curve(2, [[562, 1068], [600, 1092], [650, 1106], [710, 1108], [770, 1098], [900, 1048]])],
    ['river', 'Rideau River', curve(4, [[400, 440], [455, 530], [490, 600], [514, 740]])]
  ]

  const shields = [
    [1831, 73, 34], [1814, 136, 99], [1799, 208, 48], [1803, 271, 95], [1463, 298, 34],
    [1533, 308, 31], [1582, 337, 48], [1474, 356, 42], [1513, 351, 40], [2218, 34, 68],
    [2409, 284, 50], [1979, 316, 64], [2020, 365, 99]
  ]

  const pins = [
    [1562, 55, '#b366ff', 'art'],
    [1615, 43, '#78909c', 'church'],
    [1695, 164, '#0a93f5', 'shop'],
    [1753, 160, '#b366ff', 'museum'],
    [1527, 203, '#b366ff', 'rook'],
    [1509, 254, '#b366ff', 'museum'],
    [1837, 215, '#78909c', 'school'],
    [383, 392, '#18a572', 'golf']
  ]
</script>

{#snippet lock()}
  <svg class="lock" viewBox="0 0 22 25" aria-hidden="true">
    <path d="M5 8.5V6.5a6 6 0 0 1 12 0v2M1 8.5h20v15H1zM11 14v4" />
  </svg>
{/snippet}

{#snippet original(value)}
  <p class="original"><b>Original</b>: {value}</p>
{/snippet}

<main class="page">
  <section class="field">
    <label class="title" for="capability-search">Sub Capabilities {@render lock()}</label>
    <div class="picker">
      <div class="picker-search">
        <input id="capability-search" type="text" placeholder="Search..." bind:value={search} />
      </div>
      <div class="picker-panes">
        <div class="choices">
          <ul>
            {#each capabilities as name}
              <li><button type="button">{name}</button></li>
            {/each}
          </ul>
          <div class="scrollbar" aria-hidden="true">
            <svg viewBox="0 0 14 11"><path d="M7 1.5L12.5 9.5H1.5Z" /></svg>
            <div class="track"><div class="thumb"></div></div>
            <svg viewBox="0 0 14 11"><path d="M7 9.5L12.5 1.5H1.5Z" /></svg>
          </div>
        </div>
        <div class="values"></div>
      </div>
    </div>
    {@render original('')}
  </section>

  <section class="field">
    <label class="title" for="region">Region {@render lock()}</label>
    <input class="text" id="region" type="text" bind:value={region} />
    {@render original('Global')}
  </section>

  <section class="field">
    <label class="title" for="country">Country {@render lock()}</label>
    <input class="text" id="country" type="text" bind:value={country} />
    {@render original('Africa')}
  </section>

  <section class="field">
    <h2 class="title">Country Map {@render lock()}</h2>
    <p class="empty">No image selected</p>
    {@render original('1592')}
  </section>

  <section class="field">
    <h2 class="title">Country Flag {@render lock()}</h2>
    <p class="empty">No image selected</p>
    {@render original('')}
  </section>

  <section class="field last">
    <label class="title" for="address">Coordinates {@render lock()}</label>
    <div class="geo">
      <input id="address" type="text" placeholder="Search for address..." bind:value={address} />
      <div class="map">
        <svg class="canvas" role="img" aria-label="Map of Ottawa">
          <g transform="translate(-13 -13)">
            <g transform="scale(0.33333)">
              {#each areas as [t, kind, d]}
                <path class={kind} transform="translate({t * TILE} 0)" {d} />
              {/each}
              {#each waters as [t, kind, d]}
                <path class={kind} transform="translate({t * TILE} 0)" {d} />
              {/each}
              {#each streams as [t, w, d]}
                <path class="stream" stroke-width={w} transform="translate({t * TILE} 0)" {d} />
              {/each}
              {#each minor as [t, d]}
                <path class="minor" transform="translate({t * TILE} 0)" {d} />
              {/each}
              {#each trails as [t, kind, d]}
                <path class="line {kind}" transform="translate({t * TILE} 0)" {d} />
              {/each}
              {#each roads as [t, kind, w, d]}
                <path class="line {kind}-edge" stroke-width={w + 4} transform="translate({t * TILE} 0)" {d} />
              {/each}
              {#each roads as [t, kind, w, d]}
                <path class="line {kind}" stroke-width={w} transform="translate({t * TILE} 0)" {d} />
              {/each}
            </g>

            <!-- markers cut off by the top and bottom edges -->
            <ellipse cx="244" cy="12" rx="15" ry="6" fill="#6a9e3c" />
            <ellipse cx="697" cy="11" rx="14" ry="5" fill="#6a9e3c" />
            <path d="M848 8h30v7q-4 5 -15 5t-15 -5z" fill="#6a9e3c" />
            <path class="pin" d="M92 8h27v6l-9 7q-4 3 -8 0l-10 -8z" />
            <rect x="2232" y="373" width="25" height="25" rx="3" fill="#168f55" />
            <path d="M2244 376l3 5 3-2-1 7 4-3 1 3 3-1-1 4 1 1-6 5 1 2-7-1v3h-2v-3l-7 1 1-2-5-5 1-1-1-4 3 1 1-3 3 3-1-7 3 2z" fill="#fff" />
            <circle cx="2387" cy="404" r="10" fill="#44566b" />
            <path d="M2382 404v-4q0-2 2-2h6q2 0 2 2v4" fill="none" stroke="#fff" stroke-width="2" />

            {#each shields as [x, y, n]}
              <path class="shield" d="M{x - 11} {y - 10}h22q1 0 1 1l-2 18q0 1 -1 1h-18q-1 0 -1 -1l-2 -18q0 -1 1 -1z" />
              <text class="number" x={x} y={y + 5} text-anchor="middle">{n}</text>
            {/each}

            {#each streets as [kind, text, d], i}
              <path id="street-{i}" {d} fill="none" />
              <text class={kind}><textPath href="#street-{i}">{text}</textPath></text>
            {/each}

            {#each labels as [kind, anchor, x, y, lines, step]}
              <text class={kind} text-anchor={anchor}>
                {#each lines as line, i}<tspan {x} y={y + i * (step ?? 0)}>{line}</tspan>{/each}
              </text>
            {/each}

            {#each pins as [x, y, color, icon]}
              <g transform="translate({x} {y})">
                <path class="pin" d="M-12.5 12A17.3 17.3 0 1 1 12.5 12L3 21.5Q0 24 -3 21.5Z" />
                <circle r="15.5" fill={color} />
                {#if icon === 'art'}
                  <path d="M-8.500 -2Q-8 -8 0 -8.500Q8 -8.500 8.500 0Q8 8 1 8.500Q-3 8 -2 5Q0 2 -3 2H-6Q-8.500 2 -8.500 -2Z" fill="#fff" />
                  <g fill={color}><circle cx="-4.500" cy="-2" r="1.500" /><circle cx="-1" cy="-5" r="1.500" /><circle cx="3.500" cy="-4" r="1.500" /><circle cx="5" cy="0.500" r="1.500" /><circle cx="3" cy="5" r="1.500" /></g>
                {:else if icon === 'church'}
                  <path d="M0 -9V9M-6 -4H6" stroke="#fff" stroke-width="3" />
                {:else if icon === 'shop'}
                  <path d="M-6 -3H6L7.5 7H-7.5Z" fill="#fff" />
                  <path d="M-3 -3V-5A3 3 0 0 1 3 -5V-3" fill="none" stroke="#fff" stroke-width="2" />
                  <path d="M-3 1Q0 5 3 1" fill="none" stroke={color} stroke-width="2" />
                {:else if icon === 'museum'}
                  <path d="M-9 -4L0 -10L9 -4V-2H-9ZM-7 -2H-5V6H-7ZM5 -2H7V6H5ZM-9 6H9V8H-9Z" fill="#fff" />
                  <path d="M-2.5 5V0L0 3L2.5 0V5" fill="none" stroke="#fff" stroke-width="1.500" />
                {:else if icon === 'rook'}
                  <path d="M-6 -9H-3V-7H-1V-9H1V-7H3V-9H6V-4L3 -2L4 4H-4L-3 -2L-6 -4ZM-5 4H5L8 8H-8Z" fill="#fff" />
                {:else if icon === 'school'}
                  <path d="M-10 -2L0 -7L10 -2L0 3ZM-6 2L0 5L6 2V5L0 8L-6 5ZM8 -2H10V5H8Z" fill="#fff" />
                {:else}
                  <path d="M-5 -8H6V-5H-4" fill="none" stroke="#fff" stroke-width="1.500" />
                  <path d="M-4 -4H1L-1 1L3 5V9H1V6L-3 2L-5 9H-7L-5 0Z" fill="#fff" />
                  <circle cx="6" cy="8" r="1" fill="#fff" />
                {/if}
              </g>
            {/each}
          </g>
        </svg>
        <div class="map-types">
          <button type="button" class:active={mapType === 'map'} onclick={() => (mapType = 'map')}>Map</button>
          <button type="button" class:active={mapType === 'satellite'} onclick={() => (mapType = 'satellite')}>Satellite</button>
        </div>
      </div>
    </div>
  </section>
</main>

<style>
  :global(body) { background: #f0f0f0; }

  .page {
    height: 100vh;
    box-sizing: border-box;
    padding: 35px 0 0 12px;
    display: flex; flex-direction: column;
    gap: 56px;
    overflow: hidden;
    font-family: "Open Sans", "Noto Sans", sans-serif;
    font-size: 20px;
    line-height: 24px;
    color: #3c434a;
  }

  .page * { box-sizing: border-box; }

  input, button { font: inherit; color: inherit; margin: 0; }
  input::placeholder { color: #72777c; opacity: 1; }
  p, ul { margin: 0; padding: 0; }

  .field { display: flex; flex-direction: column; flex: none; }

  .title {
    display: flex; align-items: center; gap: 12px;
    height: 24px;
    margin: 0 0 17px;
    font-size: 20px; font-weight: 600;
  }

  .lock { width: 22px; height: 25px; fill: none; stroke: #3c434a; stroke-width: 1.5; }

  .text {
    width: 100%; height: 45px;
    padding: 2px 12px 0;
    border: 1px solid #8c8f94; border-right: 0;
    border-radius: 4px 0 0 4px;
    background: #fff;
    color: #2c3338;
  }

  .original { margin-top: 12px; height: 25px; color: #999; }
  .original b { font-weight: 600; }
  .empty { margin: 4px 0 3px; height: 24px; font-size: 19px; }

  /* relationship picker */
  .picker { border: 1px solid #c9ccd0; border-right: 0; background: #fff; }
  .picker-search { padding: 11px 0 10px 11px; border-bottom: 1px solid #c9ccd0; }
  .picker-search input {
    display: block; width: 100%; height: 45px;
    padding: 2px 5px 0;
    border: 0; border-radius: 4px 0 0 4px;
    background: #f6f8f7;
  }
  .picker-panes { display: flex; height: 256px; }
  .choices {
    flex: 0 0 62.8%;
    display: flex; justify-content: space-between;
    overflow: hidden;
    background: #f9f9f9;
    border-right: 1px solid #dcdcde;
  }
  .choices ul { list-style: none; margin-top: -31px; }
  .choices button {
    display: block; height: 46px;
    padding: 0 15px;
    border: 0; background: none;
    text-align: left;
  }
  .values { flex: 1; }

  .scrollbar {
    width: 23px;
    padding: 6px 0;
    display: flex; flex-direction: column; align-items: center;
    background: #fcfcfc;
  }
  .scrollbar svg { width: 14px; height: 11px; fill: #8b8b8b; stroke: #8b8b8b; stroke-width: 2; stroke-linejoin: round; }
  .track { flex: 1; padding-top: 137px; }
  .thumb { width: 13px; height: 54px; border-radius: 7px; background: #8b8b8b; }

  /* map field */
  .last { flex: 1; min-height: 0; }
  .geo {
    flex: 1; min-height: 0;
    display: flex; flex-direction: column;
    border: 1px solid #c9ccd0; border-width: 1px 0 0 1px;
  }
  .geo input {
    height: 61px; width: 100%;
    padding: 2px 15px 0;
    border: 0; border-bottom: 1px solid #c9ccd0;
    background: #f6f8f7;
  }
  .map { position: relative; flex: 1; min-height: 0; overflow: hidden; background: #f5f3f4; font-family: Roboto, sans-serif; }
  .canvas { display: block; width: 100%; height: 100%; }

  .map-types {
    position: absolute; top: 15px; left: 15px;
    display: flex;
    border-radius: 3px;
    background: #fff;
    box-shadow: 0 1px 5px rgba(0, 0, 0, 0.3);
  }
  .map-types button {
    height: 60px;
    padding: 2px 34px 0;
    border: 0; background: none;
    font-size: 27px; line-height: 58px;
    color: #565656;
  }
  .map-types button + button { border-left: 1px solid #e6e6e6; }
  .map-types .active { font-weight: 500; color: #000; }

  .land { fill: #f5f3f4; }
  .park { fill: #d3f8e2; }
  .wood { fill: #c3f1d5; }
  .turf { fill: #b6f0cc; }
  .sand { fill: #f5f0e5; }
  .sand2 { fill: #f4e8d8; }
  .shop { fill: #f8f0dd; }
  .pink { fill: #fce8e6; }
  .water { fill: #90daee; }

  .stream, .minor, .line { fill: none; stroke-linejoin: round; stroke-linecap: round; }
  .stream { stroke: #90daee; }
  .minor { stroke: #cfdae5; stroke-width: 5; }
  .trail { stroke: #8fd3b4; stroke-width: 3; }
  .deep { stroke: #35a660; stroke-width: 4; }
  .dash { stroke-dasharray: 12 8; stroke-linecap: butt; }
  .rail { stroke: #d3d0d8; stroke-width: 4; }
  .border { stroke: #5f6f7a; stroke-width: 4; stroke-dasharray: 7 9; stroke-linecap: butt; }
  .road { stroke: #cdd7e2; }
  .road-edge { stroke: #bac5d0; }
  .city { stroke: #d6dfe7; }
  .city-edge { stroke: #cfd9e2; }
  .hwy { stroke: #8ba4c1; }
  .hwy-edge { stroke: #7590b2; }

  text { paint-order: stroke; stroke: #fff; stroke-width: 4px; stroke-linejoin: round; }
  .area { font-size: 18px; font-weight: 500; letter-spacing: 2px; fill: #2f3336; }
  .thin { font-weight: 400; fill: #444; }
  .poi { font-size: 21px; }
  .green { fill: #1e8e65; }
  .purple { fill: #8a43dc; }
  .blue { fill: #1a73e8; }
  .slate { fill: #5b7583; }
  .street { font-size: 17px; fill: #3b4856; }
  .province { font-size: 21px; font-weight: 500; fill: #4f5357; }
  .river { font-size: 18px; fill: #1c8aa0; stroke: none; }
  .number { font-size: 14px; font-weight: 500; fill: #3c4043; stroke: none; }
  .shield { fill: #fff; stroke: #7b7b7b; stroke-width: 2; }
  .pin { fill: #fff; filter: drop-shadow(0 1px 1px rgba(0, 0, 0, 0.45)); }
</style>
